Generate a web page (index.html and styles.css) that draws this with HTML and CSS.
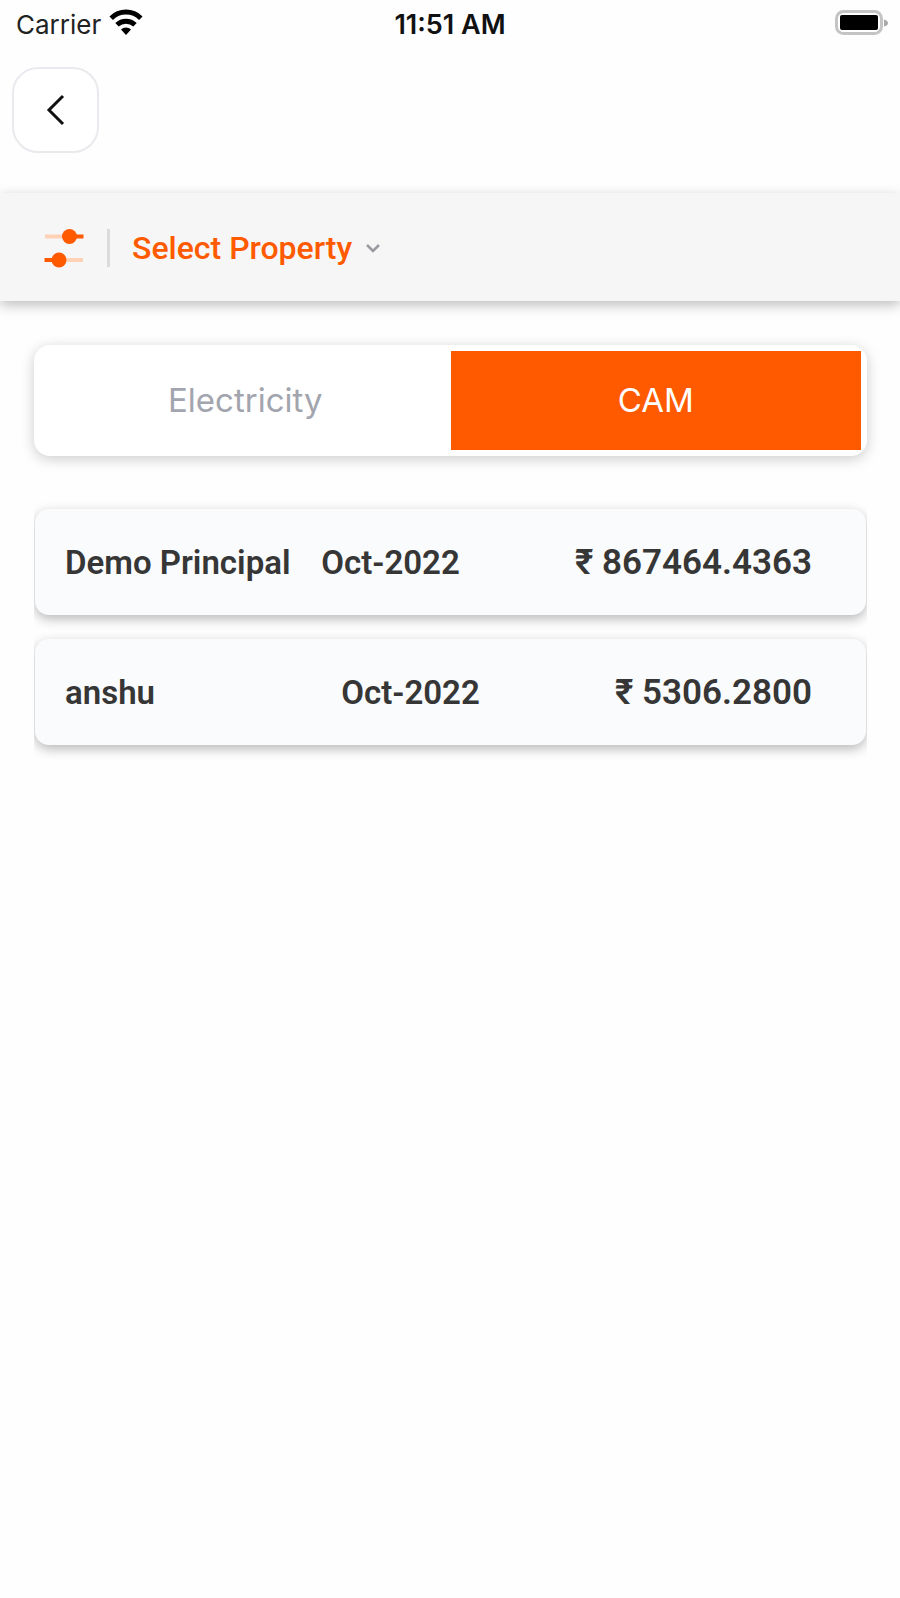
FILE: index.html
```html
<!DOCTYPE html>
<html lang="en">
<head>
<meta charset="utf-8">
<meta name="viewport" content="width=device-width, initial-scale=1">
<title>CAM</title>
<link rel="stylesheet" href="styles.css">
</head>
<body>
<div class="status">
  <div class="status-left">
    <span>Carrier</span>
    <svg class="wifi" width="34" height="26" viewBox="0 0 34 26" aria-hidden="true">
      <path d="M2.200 9.200A21 21 0 0 1 31.800 9.200" fill="none" stroke="#000" stroke-width="5"/>
      <path d="M8 15.800A13 13 0 0 1 26 15.800" fill="none" stroke="#000" stroke-width="5"/>
      <path d="M17 26L12 20.500A7 7 0 0 1 22 20.500Z" fill="#000"/>
    </svg>
  </div>
  <span class="time">11:51 AM</span>
  <div class="status-right">
    <svg width="54" height="26" viewBox="0 0 54 26" aria-hidden="true">
      <rect x="2.500" y="1.500" width="45" height="22" rx="7" fill="#fff" stroke="#c4c4c4" stroke-width="3"/>
      <rect x="6" y="5" width="38" height="15" rx="2" fill="#000"/>
      <path d="M50 9.500Q54 10.500 54 13T50 16.500Z" fill="#aaa"/>
    </svg>
  </div>
</div>

<header class="topbar">
  <button class="back" type="button" aria-label="Back">
    <svg width="20" height="32" viewBox="0 0 20 32" aria-hidden="true"><path d="M17 2L3 16L17 30" fill="none" stroke="#111" stroke-width="3"/></svg>
  </button>
</header>

<div class="filter">
  <button class="filter-button" type="button">
    <svg width="40" height="40" viewBox="0 0 40 40" aria-hidden="true">
      <path d="M1 8.500H24M16 32H39" stroke="#ffd2b8" stroke-width="4"/>
      <path d="M26 8.500H39.500M.500 32H14" stroke="#ff5a00" stroke-width="4"/>
      <circle cx="25.500" cy="8.500" r="7.500" fill="#ff5a00"/>
      <circle cx="15" cy="32" r="7.500" fill="#ff5a00"/>
    </svg>
    <span class="divider"></span>
    <span class="filter-label">Select Property</span>
    <svg width="14" height="10" viewBox="0 0 14 10" aria-hidden="true"><path d="M1 2L7 8L13 2" fill="none" stroke="#9a9aa0" stroke-width="2.500"/></svg>
  </button>
</div>

<main class="content">
  <div class="tabs" role="tablist">
    <button class="tab" type="button" role="tab" aria-selected="false">Electricity</button>
    <button class="tab tab-active" type="button" role="tab" aria-selected="true">CAM</button>
  </div>
  <ul class="bills">
    <li class="bill"><span class="name">Demo Principal</span><span class="month">Oct-2022</span><span class="amount">₹ 867464.4363</span></li>
    <li class="bill"><span class="name">anshu</span><span class="month">Oct-2022</span><span class="amount">₹ 5306.2800</span></li>
  </ul>
</main>
</body>
</html>
```

FILE: styles.css
```css
* { box-sizing: border-box; }

body {
  margin: 0;
  background: #fefefe;
  color: #363636;
  font-family: Roboto, "Noto Sans", sans-serif;
}

button {
  margin: 0;
  padding: 0;
  border: 0;
  background: none;
  font: inherit;
  color: inherit;
  cursor: pointer;
}

svg { display: block; flex: none; }

.status {
  display: grid;
  grid-template-columns: 1fr auto 1fr;
  align-items: center;
  height: 48px;
  padding: 0 12px 0 16px;
  font-family: Inter, sans-serif;
  font-size: 26px;
  color: #222;
}

.status-left { display: flex; align-items: center; gap: 8px; }
.wifi { margin-bottom: 4px; }
.time { padding-right: 4px; color: #111; font-size: 27px; font-weight: 600; }
.status-right { display: flex; justify-content: flex-end; padding-bottom: 2px; }

.topbar { padding: 19px 12px 40px; }

.back {
  display: flex;
  align-items: center;
  justify-content: center;
  width: 87px;
  height: 86px;
  border: 2px solid #e8eaed;
  border-radius: 26px;
  background: #fff;
}

.filter {
  padding: 0 44px;
  background: #f6f6f6;
  box-shadow: 0 4px 12px rgba(0, 0, 0, 0.26);
}

.filter-button { display: flex; align-items: center; height: 108px; padding-top: 2px; }
.divider { width: 3px; height: 38px; margin: 0 22px 0 23px; background: #dcdcdc; }
.filter-label { margin-right: 14px; color: #ff5a00; font-size: 32px; font-weight: 500; }

.content { padding: 44px 33px 44px 34px; }

.tabs {
  display: flex;
  height: 111px;
  padding: 6px;
  border-radius: 16px;
  background: #fff;
  box-shadow: 0 3px 14px rgba(0, 0, 0, 0.2);
}

.tab {
  flex: 1;
  padding-bottom: 2px;
  color: #a2a5ae;
  font-family: Inter, sans-serif;
  font-size: 33px;
}

.tab-active { background: #ff5a00; color: #fff; }

.bills {
  display: flex;
  flex-direction: column;
  gap: 24px;
  margin: 37px 0 0;
  padding: 16px 1px 20px;
  overflow: hidden;
  list-style: none;
}

.bill {
  display: flex;
  align-items: center;
  height: 106px;
  padding: 0 54px 0 30px;
  border-radius: 14px;
  background: #fafbfc;
  box-shadow: 0 4px 12px rgba(0, 0, 0, 0.28);
  font-size: 33px;
  font-weight: 600;
  white-space: nowrap;
}

.name { flex: none; width: 225px; }
.month { flex: 1; text-align: center; }
.amount { margin-left: 84px; font-size: 35px; }
```
